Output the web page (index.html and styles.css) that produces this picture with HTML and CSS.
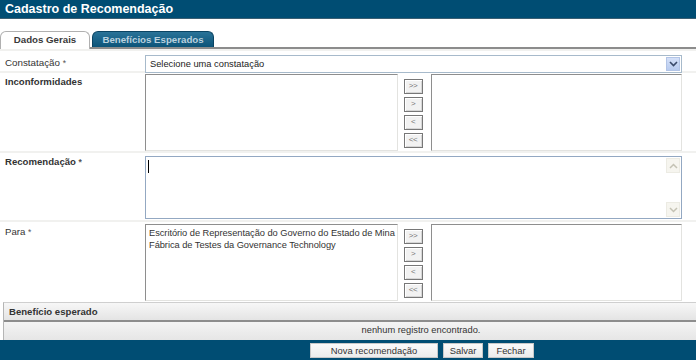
FILE: index.html
```html
<!DOCTYPE html>
<html lang="pt-BR">
<head>
<meta charset="utf-8">
<title>Cadastro de Recomendação</title>
<link rel="stylesheet" href="styles.css">
</head>
<body>
<div class="page">
  <div class="titlebar">Cadastro de Recomendação</div>
  <div class="tabs">
    <div class="tab tab-active">Dados Gerais</div>
    <div class="tab tab-inactive">Benefícios Esperados</div>
  </div>

  <div class="row row-select">
    <div class="label">Constatação <span class="req">*</span></div>
    <div class="field">
      <div class="select">
        <span class="select-text">Selecione uma constatação</span>
        <span class="select-arrow">
          <svg width="9" height="6" viewBox="0 0 9 6"><path d="M1 1 L4.5 4.5 L8 1" fill="none" stroke="#3a4a6a" stroke-width="1.6"/></svg>
        </span>
      </div>
    </div>
  </div>

  <div class="row row-list">
    <div class="label bold">Inconformidades</div>
    <div class="field picker">
      <div class="listbox"></div>
      <div class="movers">
        <div class="mover">&gt;&gt;</div>
        <div class="mover">&gt;</div>
        <div class="mover">&lt;</div>
        <div class="mover">&lt;&lt;</div>
      </div>
      <div class="listbox listbox-right"></div>
    </div>
  </div>

  <div class="row row-text">
    <div class="label bold">Recomendação <span class="req">*</span></div>
    <div class="field">
      <div class="textarea">
        <div class="textarea-body"><span class="caret"></span></div>
        <div class="scrollbar">
          <div class="sb-btn">
            <svg width="9" height="6" viewBox="0 0 9 6"><path d="M1 5 L4.5 1.5 L8 5" fill="none" stroke="#c4c2b4" stroke-width="1.5"/></svg>
          </div>
          <div class="sb-btn">
            <svg width="9" height="6" viewBox="0 0 9 6"><path d="M1 1 L4.5 4.5 L8 1" fill="none" stroke="#c4c2b4" stroke-width="1.5"/></svg>
          </div>
        </div>
      </div>
    </div>
  </div>

  <div class="row row-list row-para">
    <div class="label">Para <span class="req">*</span></div>
    <div class="field picker">
      <div class="listbox">
        <div class="option">Escritório de Representação do Governo do Estado de Mina</div>
        <div class="option">Fábrica de Testes da Governance Technology</div>
      </div>
      <div class="movers">
        <div class="mover">&gt;&gt;</div>
        <div class="mover">&gt;</div>
        <div class="mover">&lt;</div>
        <div class="mover">&lt;&lt;</div>
      </div>
      <div class="listbox listbox-right"></div>
    </div>
  </div>

  <div class="grid">
    <div class="grid-head">Benefício esperado</div>
    <div class="grid-empty">nenhum registro encontrado.</div>
  </div>

  <div class="footer">
    <div class="btn btn-wide">Nova recomendação</div>
    <div class="btn btn-salvar">Salvar</div>
    <div class="btn btn-fechar">Fechar</div>
  </div>
</div>
</body>
</html>
```

FILE: styles.css
```css
* { box-sizing: border-box; }
html, body { margin: 0; padding: 0; background: #ffffff; }
body {
  font-family: "Liberation Sans", Arial, sans-serif;
  font-size: 9.3px;
  color: #333333;
  width: 696px;
  height: 360px;
  overflow: hidden;
}
.page { width: 696px; }

.titlebar {
  height: 19px;
  line-height: 18px;
  background: #004d73;
  border-bottom: 1px solid #3b5f73;
  color: #ffffff;
  font-weight: bold;
  font-size: 12.5px;
  padding-left: 5px;
}

.tabs {
  display: flex;
  align-items: flex-end;
  height: 30px;
  border-bottom: 2px solid #8c8c8c;
}
.tab {
  height: 17px;
  line-height: 16px;
  font-weight: bold;
  font-size: 9.7px;
  text-align: center;
  margin-bottom: -2px;
}
.tab-active {
  width: 90px;
  background: #ffffff;
  border: 1px solid #b0b0b0;
  border-bottom: none;
  border-radius: 6px 6px 0 0;
  color: #3a3a3a;
  height: 18px;
}
.tab-inactive {
  width: 122px;
  margin-left: 2px;
  background: linear-gradient(#2a7398, #0c5479);
  border: 1px solid #0a4463;
  border-bottom: none;
  border-radius: 6px 6px 0 0;
  color: #b9d1df;
  margin-bottom: 0;
  height: 16px;
}

.row {
  display: grid;
  grid-template-columns: 145px 537px;
  border-bottom: 2px solid #f1f1ef;
}
.label {
  padding-left: 5px;
  line-height: 14px;
  font-size: 9.6px;
  color: #333333;
}
.label.bold { font-weight: bold; }
.req { color: #555; font-size: 8.5px; }

.row-select { padding-top: 4px; height: 24px; border-top: 2px solid #f1f1ef; }
.row-select .label { line-height: 16px; font-size: 9.8px; }

.select {
  height: 18px;
  display: flex;
  align-items: center;
  justify-content: space-between;
  border: 1px solid #a7bacb;
  background: #ffffff;
  padding-left: 4px;
  padding-right: 1px;
}
.select-text { color: #222222; }
.select-arrow {
  width: 14px;
  height: 14px;
  background: linear-gradient(#d4e0f8, #b8cbef);
  border: 1px solid #b2c4e6;
  display: flex;
  align-items: center;
  justify-content: center;
}

.row-list { padding-top: 1px; height: 80px; }
.row-list .label { padding-top: 1px; }
.picker { display: flex; align-items: flex-start; }
.listbox {
  width: 253px;
  height: 77px;
  border: 1px solid #e3e3e0;
  border-top-color: #8e8e8e;
  border-left-color: #8e8e8e;
  background: #ffffff;
  padding: 2px 0 2px 3px;
}
.listbox-right { width: 252px; }
.option {
  white-space: nowrap;
  line-height: 12px;
  color: #333333;
  letter-spacing: -0.05px;
}
.movers {
  display: flex;
  flex-direction: column;
  gap: 3px;
  padding-top: 5px;
  margin-left: 6px;
  margin-right: 8px;
}
.mover {
  width: 19px;
  height: 15px;
  border: 1px solid #777777;
  box-shadow: inset 1px 1px 0 #ffffff, inset -1px -1px 0 #d6d6d6;
  background: #f2f2f2;
  color: #777777;
  font-size: 8px;
  line-height: 12px;
  text-align: center;
  letter-spacing: -0.5px;
}

.row-text { padding-top: 3px; height: 69px; }
.row-text .label { padding-top: 1px; margin-top: -2px; }
.textarea {
  height: 63px;
  border: 1px solid #93a8c2;
  display: flex;
  background: #ffffff;
}
.textarea-body { flex: 1; padding: 3px 2px; }
.caret {
  display: block;
  width: 1px;
  height: 13px;
  background: #000000;
}
.scrollbar {
  width: 15px;
  display: flex;
  flex-direction: column;
  justify-content: space-between;
  background: #ffffff;
  padding: 1px 1px 1px 0;
}
.sb-btn {
  width: 14px;
  height: 15px;
  background: #f6f5ef;
  border: 1px solid #ecebe3;
  display: flex;
  align-items: center;
  justify-content: center;
}

.row-para { border-bottom: none; height: 80px; padding-top: 2px; }

.grid {
  margin-left: 3px;
  border-left: 1px solid #b5b5b5;
  border-top: 1px solid #cfcfcf;
}
.grid-head {
  height: 19px;
  line-height: 17px;
  padding-left: 5px;
  font-weight: bold;
  font-size: 9.6px;
  color: #333333;
  background: linear-gradient(#f7f7f7, #e4e4e4);
  border-bottom: 2px solid #8d8d8d;
}
.grid-empty {
  height: 18px;
  line-height: 17px;
  text-align: center;
  padding-left: 142px;
  color: #333333;
  background: linear-gradient(#f4f4f4, #e6e6e6);
}

.footer {
  height: 20px;
  background: #004d73;
  display: flex;
  align-items: center;
  padding-left: 310px;
  gap: 5px;
}
.btn {
  height: 15px;
  line-height: 14px;
  text-align: center;
  background: linear-gradient(#fafafa, #ececec);
  border: 1px solid #c8c8c8;
  color: #333333;
  font-size: 9.4px;
}
.btn-wide { width: 128px; }
.btn-salvar { width: 40px; }
.btn-fechar { width: 46px; }
```
